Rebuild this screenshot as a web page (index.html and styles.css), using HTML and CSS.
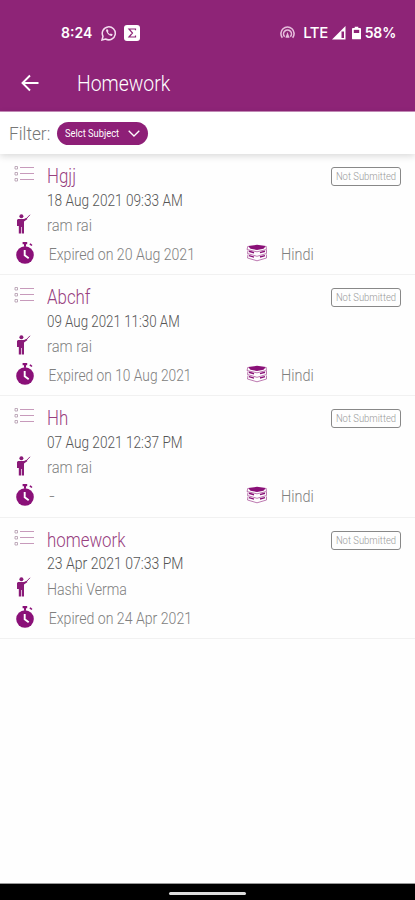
FILE: index.html
```html
<!DOCTYPE html>
<html lang="en">
<head>
<meta charset="utf-8">
<title>Homework</title>
<link rel="stylesheet" href="styles.css">
</head>
<body>
<svg class="defs" width="0" height="0">
  <symbol id="list" viewBox="0 0 20 17"><path d="M6 1.500H20M6 7.500H20M6 13.500H20" stroke="#c79abb" stroke-width="1"/><path d="M1 .5h2.500v2.500H1zM1 6.500h2.500V9H1zM1 12.500h2.500V15H1z" fill="none" stroke="#b9a3b4" stroke-width=".9"/></symbol>
  <symbol id="teacher" viewBox="0 0 15 20"><g fill="#8a1a78"><circle cx="5.400" cy="2.300" r="2"/><path d="M2 5h6l2.500-1.200 1 1.200L8 7.500V19.500H5.700V13H5v6.500H2.800V12H1V6z"/></g><path d="M10.500 4.500L14 .8" stroke="#8a1a78" stroke-width=".9"/></symbol>
  <symbol id="clock" viewBox="0 0 18 22"><g fill="#8a1078"><circle cx="9" cy="13" r="8.800"/><path d="M6.600 0h4.600v2.200H10v2.500H8V2.200H6.600zM13.300 2.200l1.200-.9 2 1.600-1.200 1.200z"/></g><path d="M8.700 8v5.200l4 3" fill="none" stroke="#fff" stroke-width="1.900"/></symbol>
  <symbol id="books" viewBox="0 0 22 18"><path d="M2 2L11 .8 20 2 17.500 4.800 11 6 4.500 4.800z" fill="#8a1078"/><g fill="none" stroke="#b56ba8" stroke-width=".9"><path d="M2 2L1 5.500 11 7.800 20.500 5.500 20 2M2 6.500L1.500 9.500 11 12.300 20.500 9.500V6M2 10.500L1.500 14 11 16.800 20.500 14V10.500"/></g><path d="M3 7.200l5 1.500M14 8.600l5-1.400M3 11.600l5 1.500M14 13l5-1.400" stroke="#8a1078" stroke-width="1.500"/></symbol>
</svg>
<header class="top">
  <div class="status">
    <span class="time">8:24</span>
    <svg class="wa" viewBox="0 0 16 16"><path d="M1 15l1-3.700A6.500 6.500 0 1 1 4.600 14z" fill="none" stroke="#f5ddf0" stroke-width="1.500"/><path d="M5.200 4.500c-1 1.800 2.800 6.700 5.600 6.500l1-1.500-2-1-1 .8-1.900-2.100.6-1.100-.9-1.900z" fill="#f5ddf0"/></svg>
    <svg class="sigma" viewBox="0 0 16 16"><rect width="16" height="16" rx="3" fill="#fff"/><path d="M11.500 5.300V4H5l3.500 4L5 12h6.500v-1.400" fill="none" stroke="#8e2477" stroke-width="1.200"/></svg>
    <svg class="hot" viewBox="0 0 16 13"><g fill="none" stroke="#e6bddc" stroke-width="1.700"><path d="M2.500 12A7 7 0 1 1 13.500 12M5 11A4.200 4.200 0 1 1 11 11"/></g><path d="M8 6l2.200 6H5.800z" fill="#e6bddc"/></svg>
    <span class="lte">LTE</span>
    <svg class="signal" viewBox="0 0 14 14"><path d="M0 13.500L13.500 0v13.500z" fill="#fff"/><path d="M9.500 5.500h2.500v6.500H9.500z" fill="#8e2477"/></svg>
    <svg class="battery" viewBox="0 0 10 14"><path d="M3 0h4v1.500h2q1 0 1 1V13q0 1-1 1H1q-1 0-1-1V2.500q0-1 1-1h2z" fill="#fff"/><path d="M2 3.500h6V7H2z" fill="#8e2477"/></svg>
    <span class="pct">58%</span>
  </div>
  <div class="bar">
    <svg class="back" viewBox="0 0 18 18"><path d="M17.500 9H2M9 1.500L1.500 9 9 16.500" fill="none" stroke="#fff" stroke-width="1.900"/></svg>
    <h1>Homework</h1>
  </div>
</header>
<div class="filter">
  <span class="label">Filter:</span>
  <button class="select"><span>Selct Subject</span><svg viewBox="0 0 12 7"><path d="M.7.7L6 6 11.300.7" fill="none" stroke="#fff" stroke-width="1.300"/></svg></button>
</div>
<main>
  <article>
    <svg class="i-list"><use href="#list"/></svg><h2>Hgjj</h2><span class="badge"><span>Not Submitted</span></span>
    <p class="date">18 Aug 2021 09:33 AM</p>
    <svg class="i-teacher"><use href="#teacher"/></svg><p class="name">ram rai</p>
    <svg class="i-clock"><use href="#clock"/></svg><p class="due">Expired on 20 Aug 2021</p><svg class="i-books"><use href="#books"/></svg><p class="subject">Hindi</p>
  </article>
  <article>
    <svg class="i-list"><use href="#list"/></svg><h2>Abchf</h2><span class="badge"><span>Not Submitted</span></span>
    <p class="date narrow">09 Aug 2021 11:30 AM</p>
    <svg class="i-teacher"><use href="#teacher"/></svg><p class="name">ram rai</p>
    <svg class="i-clock"><use href="#clock"/></svg><p class="due narrow">Expired on 10 Aug 2021</p><svg class="i-books"><use href="#books"/></svg><p class="subject">Hindi</p>
  </article>
  <article>
    <svg class="i-list"><use href="#list"/></svg><h2>Hh</h2><span class="badge"><span>Not Submitted</span></span>
    <p class="date">07 Aug 2021 12:37 PM</p>
    <svg class="i-teacher"><use href="#teacher"/></svg><p class="name">ram rai</p>
    <svg class="i-clock"><use href="#clock"/></svg><p class="due dash">-</p><svg class="i-books"><use href="#books"/></svg><p class="subject">Hindi</p>
  </article>
  <article>
    <svg class="i-list"><use href="#list"/></svg><h2>homework</h2><span class="badge"><span>Not Submitted</span></span>
    <p class="date wide">23 Apr 2021 07:33 PM</p>
    <svg class="i-teacher"><use href="#teacher"/></svg><p class="name long">Hashi Verma</p>
    <svg class="i-clock"><use href="#clock"/></svg><p class="due">Expired on 24 Apr 2021</p>
  </article>
</main>
<footer><span></span></footer>
</body>
</html>
```
FILE: styles.css
```css
* { box-sizing: border-box; }
body { margin: 0; height: 900px; display: flex; flex-direction: column; background: #fefefe; font-family: Roboto, "Liberation Sans", sans-serif; font-weight: 300; overflow: hidden; }
h1, h2, p { margin: 0; font-weight: 300; white-space: nowrap; }
svg { display: block; flex: none; }
.defs { position: absolute; }
.top { flex: none; height: 112px; background: #8e2477; border-bottom: 1px solid #c88dbb; color: #fff; }
.status { height: 56px; padding: 9px 19px 0 61px; display: flex; align-items: center; font-family: Inter, sans-serif; font-weight: 600; font-size: 14px; }
.time { width: 41px; }
.wa { width: 16px; height: 16px; margin-right: 7px; }
.sigma { width: 16px; height: 16px; }
.hot { width: 15px; height: 13px; margin-left: 140px; margin-right: 8px; }
.lte { width: 29px; font-weight: 500; font-size: 15px; letter-spacing: -.5px; }
.signal { width: 14px; height: 14px; margin-right: 6px; }
.battery { width: 9px; height: 14px; margin-right: 4px; }
.pct { letter-spacing: -.2px; }
.bar { height: 55px; display: flex; align-items: center; padding-left: 21px; }
.back { width: 18px; height: 18px; margin: -2px 38px 0 0; }
h1 { font-size: 22px; font-weight: 350; transform: scaleX(.88); transform-origin: left; }
.filter { flex: none; height: 42px; padding: 0 9px; display: flex; align-items: center; background: #fff; box-shadow: 0 2px 7px rgba(0, 0, 0, .15); position: relative; }
.label { width: 48px; font-size: 18.5px; color: #777; padding-top: 2px; transform: scaleX(.93); transform-origin: left; white-space: nowrap; }
.select { width: 91px; height: 23px; border: 0; border-radius: 12px; background: #8e1f77; color: #fff; padding: 0 8px; display: flex; align-items: center; justify-content: space-between; font: 400 11px Roboto, sans-serif; }
.select span { width: 55px; white-space: nowrap; transform: scaleX(.85); transform-origin: left; }
.select svg { width: 12px; height: 7px; }
main { flex: 1; }
article { height: 121.2px; padding: 11px 14px 0; border-bottom: 1px solid #f1f1f1; display: grid; grid-template-columns: 33px 199px 35px 50px 70px; grid-template-rows: 23px 23px 29px 28px; align-items: center; }
h2 { grid-column: 2; grid-row: 1; font-size: 19.5px; color: #98407f; transform: scaleX(.865); transform-origin: left; }
.i-list { grid-column: 1; grid-row: 1; width: 20px; height: 17px; align-self: start; margin-top: 1px; }
.badge { grid-column: 4 / 6; grid-row: 1; justify-self: end; width: 70px; height: 19px; border: 1px solid #888; border-radius: 3px; display: flex; align-items: center; justify-content: center; font-size: 11px; color: #999; white-space: nowrap; }
.badge span { transform: scaleX(.86); }
.date { grid-column: 2; grid-row: 2; font-size: 17px; color: #555; transform: scaleX(.803); transform-origin: left; }
.date.narrow { transform: scaleX(.785); }
.date.wide { transform: scaleX(.825); }
.i-teacher { grid-column: 1; grid-row: 3; width: 15px; height: 20px; margin: -4px 0 0 2px; }
.name { grid-column: 2; grid-row: 3; font-size: 16px; color: #808080; transform: scaleX(.92); transform-origin: left; }
.name.long { transform: scaleX(.885); }
.i-clock { grid-column: 1; grid-row: 4; width: 18px; height: 22px; margin: -2px 0 0 2px; }
.due { grid-column: 2; grid-row: 4; font-size: 17px; color: #808080; padding-left: 2px; transform: scaleX(.83); transform-origin: left; }
.due.narrow { transform: scaleX(.81); }
.due.dash { transform: scaleX(1.1); }
.i-books { grid-column: 3; grid-row: 4; width: 22px; height: 18px; margin-top: -2px; }
.subject { grid-column: 4; grid-row: 4; font-size: 17px; color: #808080; transform: scaleX(.85); transform-origin: left; }
footer { flex: none; height: 16px; background: #000; display: flex; justify-content: center; align-items: center; box-shadow: 0 -1px #999; }
footer span { width: 77px; height: 3px; border-radius: 2px; background: #ddd; margin-top: 2px; }
```
